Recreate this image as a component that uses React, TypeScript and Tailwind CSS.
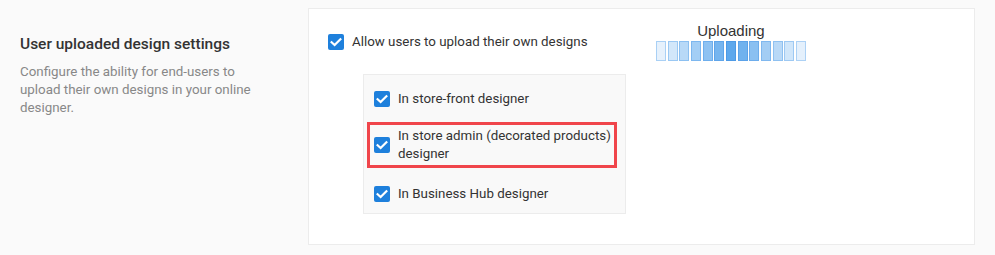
const Check = () => (
  <span className="flex h-4 w-4 shrink-0 items-center justify-center rounded-[2px] bg-[#1e80dc]">
    <svg viewBox="0 0 16 16" className="h-4 w-4">
      <path d="M3.6 8.2 6.6 11 12.4 5.2" fill="none" stroke="#fff" strokeWidth="2.2" strokeLinecap="square" />
    </svg>
  </span>
);

const segs = [
  ['#e6f1fc', '#a9d0f5'],
  ['#d2e7fa', '#9ac8f3'],
  ['#b8d9f7', '#8cc0f1'],
  ['#a3cef5', '#7db7ef'],
  ['#8ec2f2', '#6eaeed'],
  ['#76b5ef', '#5fa5ea'],
  ['#5ea8ec', '#4d9ae6'],
  ['#70b2ee', '#5ba2e9'],
  ['#8ac0f1', '#6dadec'],
  ['#a3cdf4', '#80b8ef'],
  ['#b9d9f7', '#8fc1f1'],
  ['#d0e6fa', '#9ec9f3'],
  ['#e4f0fc', '#acd1f5'],
];

export default function App() {
  return (
    <div className="flex h-[255px] w-[995px] bg-[#fafafa] font-['Roboto',sans-serif]">
      <div className="w-[308px] shrink-0 pl-5 pt-[35px]">
        <h2 className="text-[15.5px] font-medium leading-[18px] text-[#333]">User uploaded design settings</h2>
        <p className="mt-[10px] w-[245px] text-[13.35px] leading-[18px] text-[#888]">
          Configure the ability for end-users to upload their own designs in your online designer.
        </p>
      </div>
      <div className="mt-[8px] mb-[10px] mr-5 flex flex-1 border border-[#ececec] bg-white pl-[19px] pt-[25px]">
        <div className="w-[328px] shrink-0">
          <label className="flex items-center gap-2 text-[13.33px] leading-4 text-[#333]">
            <Check />
            <span>Allow users to upload their own designs</span>
          </label>
          <div className="ml-[35px] mt-[24px] w-[263px] border border-[#ececec] bg-[#f9f9f9] pt-4 pb-[11px] pl-[2px] text-[13.33px] text-[#333]">
            <div className="flex items-center gap-2 px-2 leading-4">
              <Check />
              <span>In store-front designer</span>
            </div>
            <div className="ml-[1px] mt-[15px] flex w-[250px] items-center gap-2 border-[3px] border-[#f0454b] py-[2px] pl-[4px] pr-0 leading-[18px]">
              <Check />
              <span>In store admin (decorated products) designer</span>
            </div>
            <div className="mt-[18px] flex items-center gap-2 px-2 leading-4">
              <Check />
              <span>In Business Hub designer</span>
            </div>
          </div>
        </div>
        <div className="-mt-[12px] flex flex-col items-center self-start">
          <div className="font-['Liberation_Sans',sans-serif] text-[15px] leading-[18px] text-[#333]">Uploading</div>
          <div className="mt-[1px] flex gap-[1.67px]">
            {segs.map(([bg, bd], i) => (
              <div
                key={i}
                className="h-[20px] w-[10px] border"
                style={{ backgroundColor: bg, borderColor: bd }}
              />
            ))}
          </div>
        </div>
      </div>
    </div>
  );
}
